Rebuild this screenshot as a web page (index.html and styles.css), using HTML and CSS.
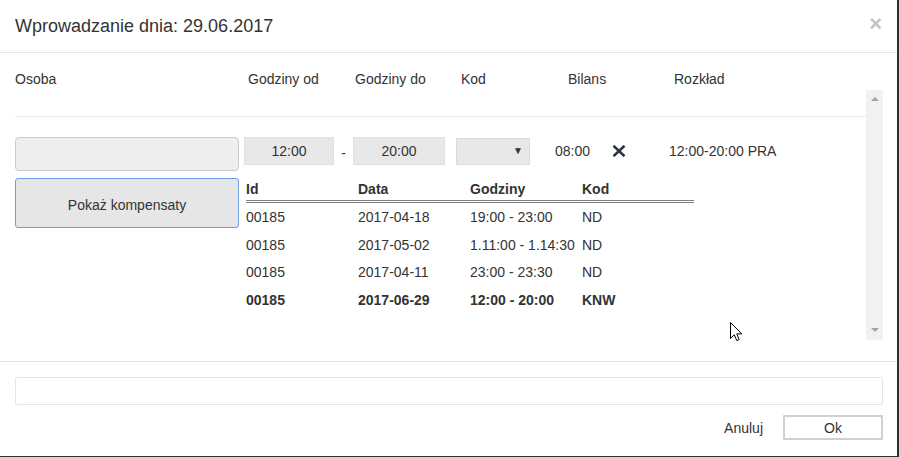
FILE: index.html
```html
<!DOCTYPE html>
<html lang="pl">
<head>
<meta charset="utf-8">
<title>Wprowadzanie dnia</title>
<link rel="stylesheet" href="styles.css">
</head>
<body>
<div class="modal">
  <div class="modal-header">
    <h4 class="modal-title">Wprowadzanie dnia: 29.06.2017</h4>
    <span class="close">×</span>
  </div>
  <div class="modal-body">
    <div class="labels">
      <span>Osoba</span>
      <span>Godziny od</span>
      <span>Godziny do</span>
      <span>Kod</span>
      <span>Bilans</span>
      <span>Rozkład</span>
    </div>
    <div class="scroll">
      <div class="scroll-content">
        <div class="spacer-row"></div>
        <div class="entry">
          <div class="left-col">
            <div class="person-input"></div>
            <button class="btn-komp">Pokaż kompensaty</button>
          </div>
          <div class="right-col">
            <div class="controls">
              <div class="time-input">12:00</div>
              <span class="dash">-</span>
              <div class="time-input wide">20:00</div>
              <div class="select"><span class="caret">▼</span></div>
              <span class="bilans">08:00</span>
              <svg class="remove" width="14" height="12" viewBox="0 0 14 12"><path d="M1.5 0.8 L12.5 11.2 M12.5 0.8 L1.5 11.2" stroke="#2b3540" stroke-width="2.6" fill="none"/></svg>
              <span class="rozklad">12:00-20:00 PRA</span>
            </div>
            <table class="komp">
              <thead>
                <tr><th>Id</th><th>Data</th><th>Godziny</th><th>Kod</th></tr>
              </thead>
              <tbody>
                <tr><td>00185</td><td>2017-04-18</td><td>19:00 - 23:00</td><td>ND</td></tr>
                <tr><td>00185</td><td>2017-05-02</td><td>1.11:00 - 1.14:30</td><td>ND</td></tr>
                <tr><td>00185</td><td>2017-04-11</td><td>23:00 - 23:30</td><td>ND</td></tr>
                <tr class="current"><td>00185</td><td>2017-06-29</td><td>12:00 - 20:00</td><td>KNW</td></tr>
              </tbody>
            </table>
          </div>
        </div>
      </div>
      <div class="scrollbar">
        <span class="arrow up"></span>
        <span class="arrow down"></span>
      </div>
    </div>
  </div>
  <div class="modal-footer">
    <div class="note"></div>
    <div class="actions">
      <span class="cancel">Anuluj</span>
      <button class="ok">Ok</button>
    </div>
  </div>
  <svg class="cursor" width="13" height="20" viewBox="0 0 13 20"><path d="M0.5 0.5 L0.5 16.5 L4.3 12.8 L6.8 18.6 L9.2 17.6 L6.8 11.9 L11.8 11.9 Z" fill="#fff" stroke="#000" stroke-width="1" stroke-linejoin="miter"/></svg>
</div>
</body>
</html>
```

FILE: styles.css
```css
* { box-sizing: border-box; }
html, body { margin: 0; padding: 0; }
body {
  background: #2b3133;
  font-family: "Liberation Sans", Arial, sans-serif;
  font-size: 14px;
  color: #333;
  width: 899px;
  height: 457px;
  overflow: hidden;
}
.modal {
  position: relative;
  width: 897px;
  height: 456px;
  background: #fff;
  display: flex;
  flex-direction: column;
}
.modal-header {
  height: 53px;
  border-bottom: 1px solid #e5e5e5;
  padding: 14px 15px 0 15px;
  display: flex;
  justify-content: space-between;
  align-items: flex-start;
}
.modal-title {
  margin: 0;
  font-size: 18px;
  font-weight: normal;
  line-height: 25.7px;
  color: #333;
}
.close {
  font-size: 22px;
  font-weight: bold;
  line-height: 1;
  color: #c4c4c4;
  margin-top: -1px;
}
.modal-body {
  padding: 16px 14px 21px 15px;
}
.labels {
  display: grid;
  grid-template-columns: 233px 107px 106px 107px 106px auto;
  line-height: 20px;
  height: 20px;
  margin-bottom: 1px;
}
.scroll {
  display: flex;
  height: 250px;
}
.scroll-content {
  flex: 1;
}
.spacer-row {
  height: 27px;
  border-bottom: 1px solid #e8e8e8;
}
.entry {
  display: flex;
  margin-top: 20px;
}
.left-col {
  width: 224px;
  margin-right: 5px;
  display: flex;
  flex-direction: column;
}
.person-input {
  height: 34px;
  background: #eee;
  border: 1px solid #ccc;
  border-radius: 4px;
}
.btn-komp {
  margin-top: 7px;
  height: 50px;
  background: #e6e6e6;
  border: 1px solid #6e9de6;
  border-radius: 3px;
  font-family: inherit;
  font-size: 14px;
  color: #333;
  padding: 3px 0 0;
}
.right-col {
  display: flex;
  flex-direction: column;
}
.controls {
  display: flex;
  align-items: center;
  height: 28px;
}
.time-input {
  width: 90px;
  height: 28px;
  background: #e8e8e8;
  border: 1px solid #e0e0e0;
  text-align: center;
  line-height: 26px;
}
.time-input.wide { width: 92px; }
.dash {
  width: 19px;
  text-align: center;
  padding-top: 4px;
}
.select {
  width: 74px;
  height: 27px;
  margin-left: 11px;
  background: #e8e8e8;
  border: 1px solid #dcdcdc;
  position: relative;
}
.caret {
  position: absolute;
  right: 6px;
  top: 6px;
  font-size: 10px;
  color: #333;
}
.bilans { margin-left: 25px; }
.remove { margin-left: 22px; }
.rozklad { margin-left: 43px; }
.komp {
  margin: 14px 0 0 2px;
  width: 448px;
  table-layout: fixed;
  border-collapse: collapse;
}
.komp th {
  text-align: left;
  font-weight: bold;
  padding: 0 0 1px;
  line-height: 20px;
  border-bottom: 3px double #808080;
}
.komp td {
  padding: 4px 0 3.5px;
  line-height: 20px;
  white-space: nowrap;
}
.komp tr.current td { font-weight: bold; }
.scrollbar {
  width: 17px;
  background: #f1f1f1;
  display: flex;
  flex-direction: column;
  justify-content: space-between;
  align-items: center;
  padding: 7px 0 8px;
}
.arrow {
  width: 0;
  height: 0;
  border-left: 4px solid transparent;
  border-right: 4px solid transparent;
}
.arrow.up { border-bottom: 4px solid #a3a3a3; }
.arrow.down { border-top: 4px solid #a3a3a3; }
.modal-footer {
  border-top: 1px solid #e5e5e5;
  padding: 15px 14px 0 15px;
}
.note {
  height: 28px;
  border: 1px solid #e5e5e5;
  border-radius: 2px;
}
.actions {
  margin-top: 10px;
  display: flex;
  justify-content: flex-end;
  align-items: center;
}
.cancel {
  margin-right: 20px;
}
.ok {
  width: 100px;
  height: 25px;
  background: #fff;
  border: 2px solid #d0d0d0;
  border-radius: 1px;
  font-family: inherit;
  font-size: 14px;
  color: #333;
  padding: 0;
}
.cursor {
  position: absolute;
  left: 730px;
  top: 322px;
}
```
